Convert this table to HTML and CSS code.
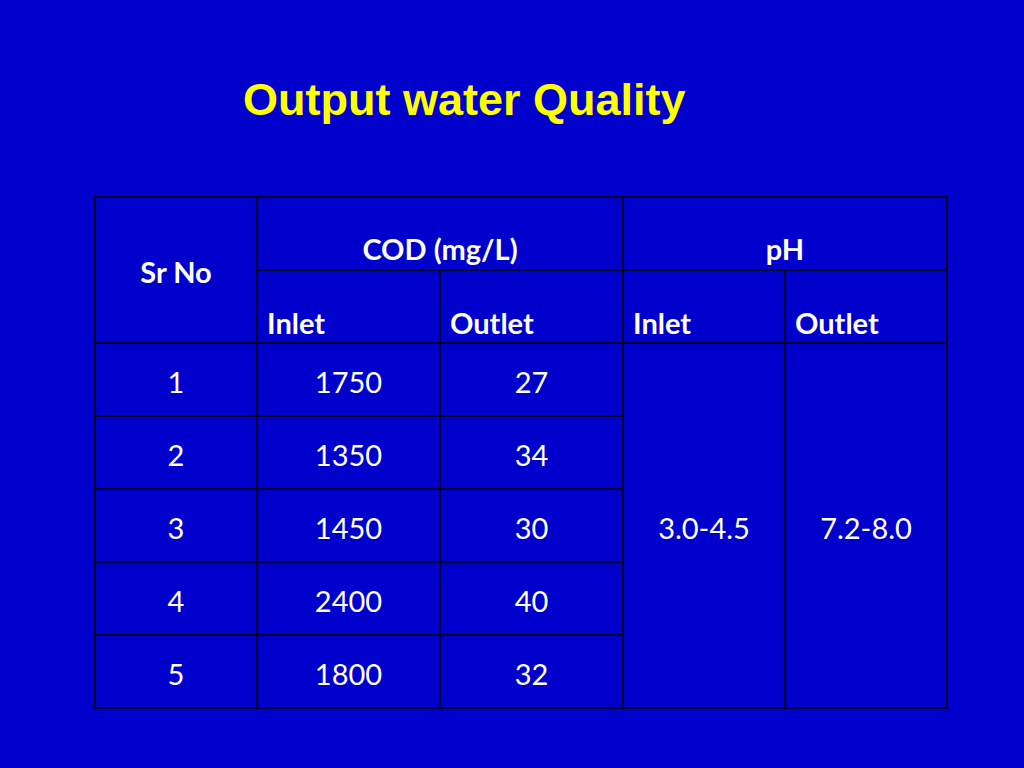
FILE: index.html
```html
<!DOCTYPE html>
<html>
<head>
	<title>Output water Quality</title>
	<link rel="stylesheet" href="styles.css">
</head>
<body>
	<h1 class="title">Output water Quality</h1>
	<table class="quality">
		<colgroup>
			<col class="c-sr">
			<col class="c-in">
			<col class="c-out">
			<col class="c-ph">
			<col class="c-ph">
		</colgroup>
		<tr class="head">
			<th rowspan="2" class="mid">Sr No</th>
			<th colspan="2" class="group">COD (mg/L)</th>
			<th colspan="2" class="group">pH</th>
		</tr>
		<tr class="head">
			<th class="sub">Inlet</th>
			<th class="sub">Outlet</th>
			<th class="sub">Inlet</th>
			<th class="sub">Outlet</th>
		</tr>
		<tr>
			<td>1</td><td>1750</td><td>27</td>
			<td rowspan="5">3.0-4.5</td>
			<td rowspan="5">7.2-8.0</td>
		</tr>
		<tr><td>2</td><td>1350</td><td>34</td></tr>
		<tr><td>3</td><td>1450</td><td>30</td></tr>
		<tr><td>4</td><td>2400</td><td>40</td></tr>
		<tr><td>5</td><td>1800</td><td>32</td></tr>
	</table>
</body>
</html>
```
FILE: styles.css
```css
body{
	margin: 0;
	background: #0000cc;
	width: 1024px;
	height: 768px;
	overflow: hidden;
}
.title{
	margin: 0;
	padding: 76px 0 0 243px;
	height: 120px;
	box-sizing: border-box;
	font-family: "Liberation Sans", Arial, sans-serif;
	font-size: 45px;
	line-height: 48px;
	font-weight: bold;
	color: #ffff00;
}
.quality{
	margin-left: 94px;
	margin-top: 76px;
	border-collapse: collapse;
	table-layout: fixed;
	width: 853px;
	font-family: Lato, "Open Sans", sans-serif;
	font-size: 29px;
	color: white;
}
.c-sr{ width: 162px; }
.c-in{ width: 183px; }
.c-out{ width: 183px; }
.c-ph{ width: 162px; }
.quality tr{
	height: 73px;
}
.quality th, .quality td{
	border: 2px solid #00002a;
	padding: 0;
	text-align: center;
	vertical-align: middle;
}
.quality th{
	font-weight: bold;
}
.quality td{
	padding-top: 4px;
}
.quality th.mid{
	padding-top: 2px;
}
.quality th.group{
	vertical-align: bottom;
	padding-bottom: 3px;
}
.quality th.sub{
	text-align: left;
	vertical-align: bottom;
	padding: 0 0 2px 9px;
}
```
